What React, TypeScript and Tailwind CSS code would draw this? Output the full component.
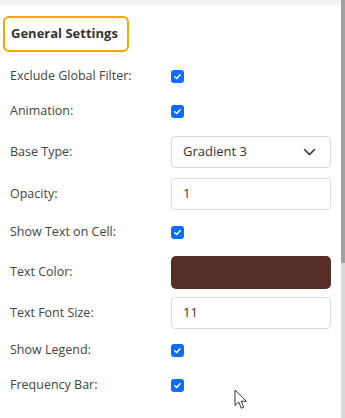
import React from "react";

function Check() {
  return (
    <span className="flex h-[13px] w-[13px] items-center justify-center rounded-[3px] bg-[#0d6efd]">
      <svg width="9" height="9" viewBox="0 0 12 12" fill="none">
        <path d="M2.5 6.3l2.4 2.3 4.6-5" stroke="#fff" strokeWidth="2" strokeLinecap="round" strokeLinejoin="round" />
      </svg>
    </span>
  );
}

function Row({ label, h, children }: { label: string; h: string; children: React.ReactNode }) {
  return (
    <div className={`flex items-center ${h}`}>
      <div className="w-[171px] shrink-0 pl-[10px] text-[12.5px] text-[#444]">{label}</div>
      <div className="flex flex-1 items-center pr-[10px]">{children}</div>
    </div>
  );
}

export default function App() {
  return (
    <div className="relative flex h-[418px] w-[345px] overflow-hidden bg-white font-['Open_Sans','Noto_Sans',sans-serif]">
      <div className="flex flex-1 flex-col">
        <div className="h-[5px] bg-[#f2f3f5]" />
        <div className="ml-[3px] mt-[11px] flex h-[36px] w-[126px] items-center rounded-[6px] border-2 border-[#f5a700] pl-[6px] text-[13px] font-bold text-[#333]">
          General Settings
        </div>
        <div className="mt-[6px] flex flex-col">
          <Row label="Exclude Global Filter:" h="h-[36px]"><Check /></Row>
          <Row label="Animation:" h="h-[34px]"><Check /></Row>
          <Row label="Base Type:" h="h-[48px]">
            <div className="flex h-[32px] w-full items-center justify-between rounded-[4px] border border-[#dcdcdc] pl-[11px] pr-[14px] text-[13px] text-[#333]">
              <span>Gradient 3</span>
              <svg width="13" height="8" viewBox="0 0 13 8" fill="none">
                <path d="M1.5 1.5l5 5 5-5" stroke="#333" strokeWidth="1.6" strokeLinecap="round" strokeLinejoin="round" />
              </svg>
            </div>
          </Row>
          <Row label="Opacity:" h="h-[36px]">
            <div className="flex h-[32px] w-full items-center rounded-[4px] border border-[#dcdcdc] pl-[11px] text-[13px] text-[#333]">1</div>
          </Row>
          <Row label="Show Text on Cell:" h="h-[40px]"><Check /></Row>
          <Row label="Text Color:" h="h-[40px]">
            <div className="h-[33px] w-full rounded-[5px] bg-[#562d27]" />
          </Row>
          <Row label="Text Font Size:" h="h-[42px]">
            <div className="flex h-[32px] w-full items-center rounded-[4px] border border-[#dcdcdc] pl-[11px] text-[13px] text-[#333]">11</div>
          </Row>
          <Row label="Show Legend:" h="h-[32px]"><Check /></Row>
          <Row label="Frequency Bar:" h="h-[38px]"><Check /></Row>
        </div>
      </div>
      <div className="flex w-[4px] flex-col bg-[#dadada]">
        <div className="h-[263px] bg-[#a3a3a3]" />
      </div>
      <svg className="absolute left-[234px] top-[389px]" width="14" height="22" viewBox="0 0 14 22" fill="none">
        <path d="M1 1v15.5l3.7-3.5 2.6 6.2 2.4-1-2.6-6h5.2z" fill="#fff" stroke="#333" strokeWidth="1" strokeLinejoin="round" />
      </svg>
    </div>
  );
}
